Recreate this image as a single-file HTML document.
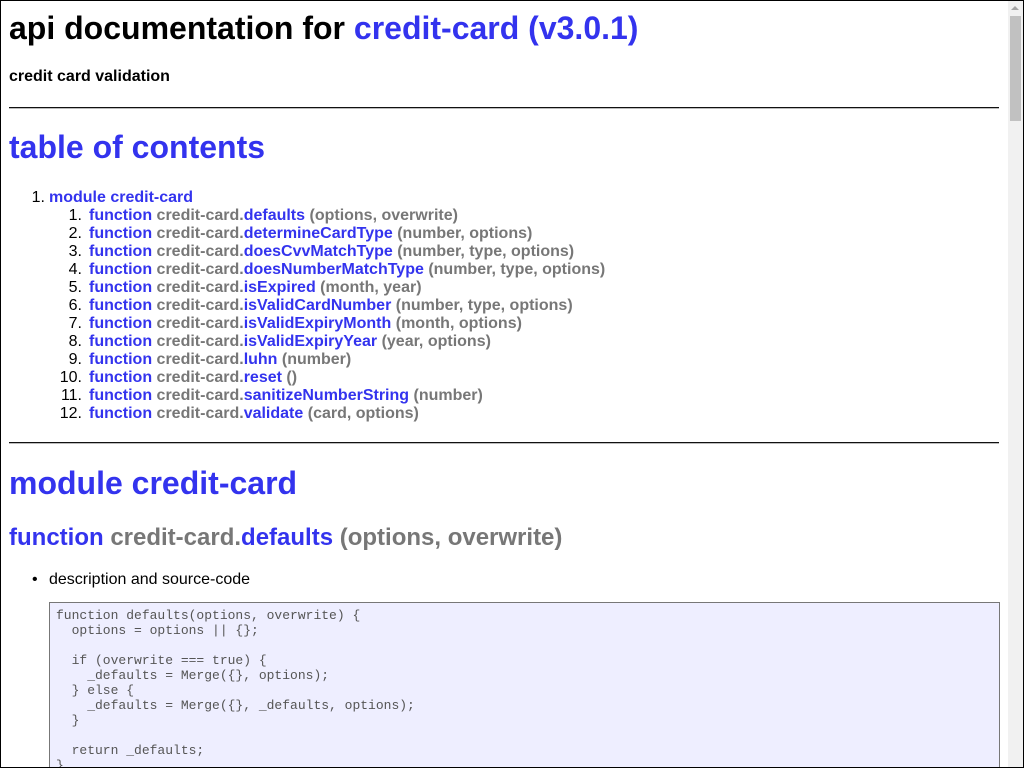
<!DOCTYPE html>
<html><head><meta charset="utf-8"><style>
html,body{margin:0;padding:0;width:1024px;height:768px;overflow:hidden;background:#fff}
body{font-family:"Liberation Sans",sans-serif;color:#000;position:relative}
.frame{position:absolute;left:0;top:0;width:1022px;height:766px;border:1px solid #000;pointer-events:none;z-index:5}
.sb{position:absolute;left:1008px;top:1px;width:15px;height:766px;background:#f1f1f1;z-index:4}
.thumb{position:absolute;left:2px;top:15px;width:11px;height:105px;background:#c1c1c1}
.arr{position:absolute;left:3px;top:5px;width:0;height:0;border-left:4px solid transparent;border-right:4px solid transparent;border-bottom:4px solid #a3a3a3}
.a{position:absolute;white-space:nowrap}
.b{color:#33e}.g{color:#777}
.h1{font-size:32px;font-weight:bold;line-height:37px}
.h3{font-size:16px;font-weight:bold;line-height:18px}
.h2{font-size:32px;font-weight:bold;line-height:37px}
.hr{position:absolute;left:9px;width:990px;height:1px;background:#111;border-bottom:1px solid #bbb}
.li{font-size:16px;line-height:18px;font-weight:bold}
.li .n{font-weight:normal;color:#000;position:absolute;text-align:right;width:40px}
.s .n{left:-47px}
pre{position:absolute;left:49px;top:602px;width:937px;height:154px;margin:0;padding:5px 6px;background:#eef;border:1px solid #777;border-bottom:none;font-family:"Liberation Mono",monospace;font-size:13px;line-height:15px;color:#555;overflow:hidden}
</style></head><body>
<div class="frame"></div>
<div class="sb"><div class="arr"></div><div class="thumb"></div></div>
<div class="a h1" style="left:9px;top:10px">api documentation for <span class="b">credit-card (v3.0.1)</span></div>
<div class="a h3" style="left:9px;top:68px">credit card validation</div>
<div class="hr" style="top:107px"></div>
<div class="a h2 b" style="left:9px;top:129px">table of contents</div>
<div class="a li" style="left:49px;top:189px"><span class="n" style="left:-44px">1.</span><span class="b">module credit-card</span></div>
<div class="hr" style="top:442px"></div>
<div class="a h2 b" style="left:9px;top:465px">module credit-card</div>
<div class="a" style="left:9px;top:524px;font-size:24px;font-weight:bold;line-height:28px"><span class="b">function</span> <span class="g">credit-card.</span><span class="b">defaults</span> <span class="g">(options, overwrite)</span></div>
<div class="a" style="left:49px;top:571px;font-size:16px;line-height:18px"><span style="position:absolute;left:-17px;top:0">•</span>description and source-code</div>
<pre>function defaults(options, overwrite) {
  options = options || {};

  if (overwrite === true) {
    _defaults = Merge({}, options);
  } else {
    _defaults = Merge({}, _defaults, options);
  }

  return _defaults;
}</pre>
<div class="a li s" style="left:89px;top:207px"><span class="n">1.</span><span class="b">function</span> <span class="g">credit-card.</span><span class="b">defaults</span> <span class="g">(options, overwrite)</span></div>
<div class="a li s" style="left:89px;top:225px"><span class="n">2.</span><span class="b">function</span> <span class="g">credit-card.</span><span class="b">determineCardType</span> <span class="g">(number, options)</span></div>
<div class="a li s" style="left:89px;top:243px"><span class="n">3.</span><span class="b">function</span> <span class="g">credit-card.</span><span class="b">doesCvvMatchType</span> <span class="g">(number, type, options)</span></div>
<div class="a li s" style="left:89px;top:261px"><span class="n">4.</span><span class="b">function</span> <span class="g">credit-card.</span><span class="b">doesNumberMatchType</span> <span class="g">(number, type, options)</span></div>
<div class="a li s" style="left:89px;top:279px"><span class="n">5.</span><span class="b">function</span> <span class="g">credit-card.</span><span class="b">isExpired</span> <span class="g">(month, year)</span></div>
<div class="a li s" style="left:89px;top:297px"><span class="n">6.</span><span class="b">function</span> <span class="g">credit-card.</span><span class="b">isValidCardNumber</span> <span class="g">(number, type, options)</span></div>
<div class="a li s" style="left:89px;top:315px"><span class="n">7.</span><span class="b">function</span> <span class="g">credit-card.</span><span class="b">isValidExpiryMonth</span> <span class="g">(month, options)</span></div>
<div class="a li s" style="left:89px;top:333px"><span class="n">8.</span><span class="b">function</span> <span class="g">credit-card.</span><span class="b">isValidExpiryYear</span> <span class="g">(year, options)</span></div>
<div class="a li s" style="left:89px;top:351px"><span class="n">9.</span><span class="b">function</span> <span class="g">credit-card.</span><span class="b">luhn</span> <span class="g">(number)</span></div>
<div class="a li s" style="left:89px;top:369px"><span class="n">10.</span><span class="b">function</span> <span class="g">credit-card.</span><span class="b">reset</span> <span class="g">()</span></div>
<div class="a li s" style="left:89px;top:387px"><span class="n">11.</span><span class="b">function</span> <span class="g">credit-card.</span><span class="b">sanitizeNumberString</span> <span class="g">(number)</span></div>
<div class="a li s" style="left:89px;top:405px"><span class="n">12.</span><span class="b">function</span> <span class="g">credit-card.</span><span class="b">validate</span> <span class="g">(card, options)</span></div>
</body></html>
